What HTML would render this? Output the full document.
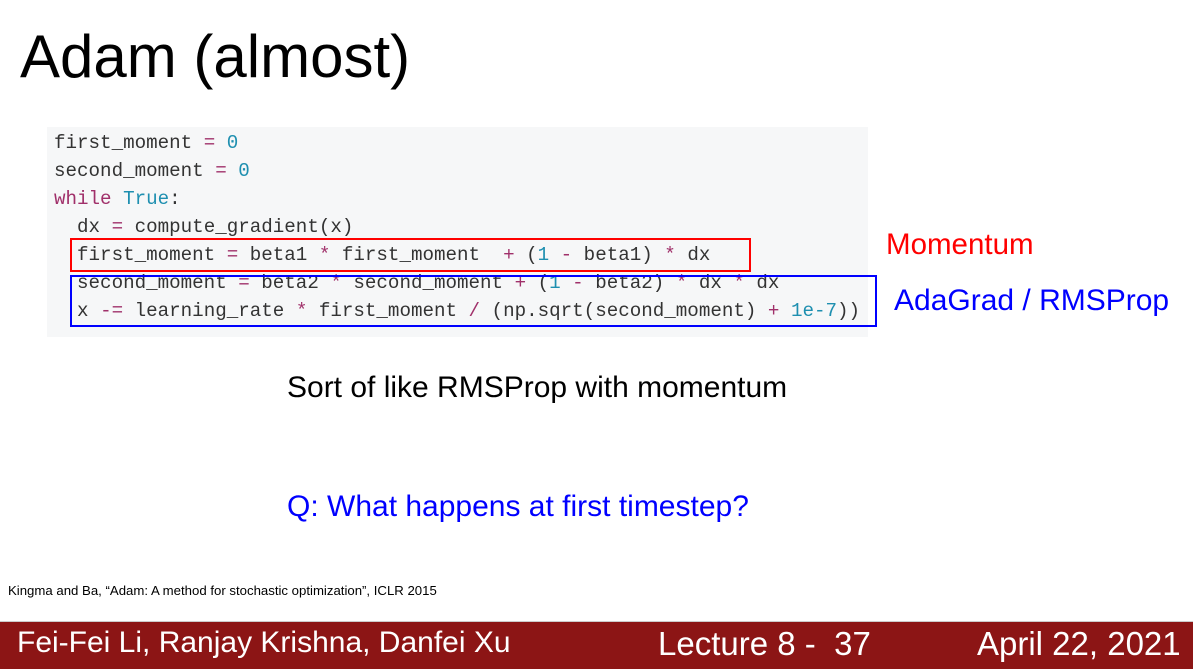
<!DOCTYPE html>
<html><head><meta charset="utf-8"><style>
body{margin:0;width:1193px;height:669px;background:#fff;position:relative;overflow:hidden;font-family:"Liberation Sans",sans-serif}
.a{position:absolute;white-space:pre}
.code{position:absolute;left:47px;top:127px;width:821px;height:210px;background:#f6f7f8}
.l{position:absolute;left:54px;font-family:"Liberation Mono",monospace;font-size:19.2px;color:#333;white-space:pre;line-height:28px}
.k{color:#a0306a}.n{color:#1e8fb0}
</style></head><body>
<div class="a" style="left:20px;top:22px;font-size:60px;color:#000">Adam (almost)</div>
<div class="code"></div>
<div class="l" style="top:129px">first_moment <span class="k">=</span> <span class="n">0</span></div>
<div class="l" style="top:157px">second_moment <span class="k">=</span> <span class="n">0</span></div>
<div class="l" style="top:185px"><span class="k">while</span> <span class="n">True</span>:</div>
<div class="l" style="top:213px">  dx <span class="k">=</span> compute_gradient(x)</div>
<div class="l" style="top:241px">  first_moment <span class="k">=</span> beta1 <span class="k">*</span> first_moment  <span class="k">+</span> (<span class="n">1</span> <span class="k">-</span> beta1) <span class="k">*</span> dx</div>
<div class="l" style="top:269px">  second_moment <span class="k">=</span> beta2 <span class="k">*</span> second_moment <span class="k">+</span> (<span class="n">1</span> <span class="k">-</span> beta2) <span class="k">*</span> dx <span class="k">*</span> dx</div>
<div class="l" style="top:297px">  x <span class="k">-=</span> learning_rate <span class="k">*</span> first_moment <span class="k">/</span> (np.sqrt(second_moment) <span class="k">+</span> <span class="n">1e-7</span>))</div>
<div style="position:absolute;left:70px;top:238px;width:677px;height:30px;border:2px solid #f00"></div>
<div style="position:absolute;left:70px;top:275px;width:803px;height:48px;border:2px solid #00f"></div>
<div class="a" style="left:886px;top:228px;font-size:29.5px;color:#f00">Momentum</div>
<div class="a" style="left:894px;top:284px;font-size:30px;color:#00f">AdaGrad / RMSProp</div>
<div class="a" style="left:287px;top:371px;font-size:30px;color:#000">Sort of like RMSProp with momentum</div>
<div class="a" style="left:287px;top:490px;font-size:30px;color:#00f">Q: What happens at first timestep?</div>
<div class="a" style="left:8px;top:583px;font-size:13.2px;color:#000">Kingma and Ba, “Adam: A method for stochastic optimization”, ICLR 2015</div>
<div style="position:absolute;left:0;top:621px;width:1193px;height:1px;background:#ccc"></div>
<div style="position:absolute;left:0;top:622px;width:1193px;height:47px;background:#8c1515"></div>
<div class="a" style="left:17px;top:626px;font-size:30px;color:#fff">Fei-Fei Li, Ranjay Krishna, Danfei Xu</div>
<div class="a" style="left:658px;top:625px;font-size:33px;color:#fff">Lecture 8 -  37</div>
<div class="a" style="left:977px;top:625px;font-size:33px;color:#fff">April 22, 2021</div>
</body></html>
